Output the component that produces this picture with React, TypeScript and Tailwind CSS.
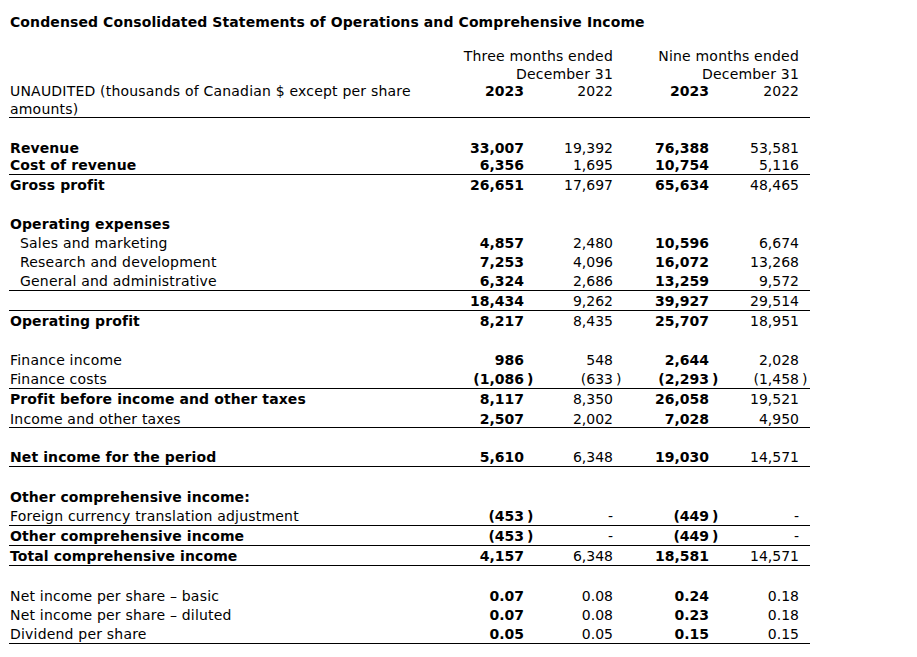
import React from "react";

type Row = {
  label?: string;
  bold?: boolean;
  indent?: boolean;
  vals?: string[];
  h: 17 | 19 | 20;
  border?: boolean;
};

const rows: Row[] = [
  { h: 20 },
  { label: "Revenue", bold: true, vals: ["33,007", "19,392", "76,388", "53,581"], h: 17 },
  { label: "Cost of revenue", bold: true, vals: ["6,356", "1,695", "10,754", "5,116"], h: 20, border: true },
  { label: "Gross profit", bold: true, vals: ["26,651", "17,697", "65,634", "48,465"], h: 20 },
  { h: 19 },
  { label: "Operating expenses", bold: true, h: 19 },
  { label: "Sales and marketing", indent: true, vals: ["4,857", "2,480", "10,596", "6,674"], h: 19 },
  { label: "Research and development", indent: true, vals: ["7,253", "4,096", "16,072", "13,268"], h: 19 },
  { label: "General and administrative", indent: true, vals: ["6,324", "2,686", "13,259", "9,572"], h: 20, border: true },
  { vals: ["18,434", "9,262", "39,927", "29,514"], h: 20, border: true },
  { label: "Operating profit", bold: true, vals: ["8,217", "8,435", "25,707", "18,951"], h: 19 },
  { h: 20 },
  { label: "Finance income", vals: ["986", "548", "2,644", "2,028"], h: 19 },
  { label: "Finance costs", vals: ["(1,086)", "(633)", "(2,293)", "(1,458)"], h: 20, border: true },
  { label: "Profit before income and other taxes", bold: true, vals: ["8,117", "8,350", "26,058", "19,521"], h: 20 },
  { label: "Income and other taxes", vals: ["2,507", "2,002", "7,028", "4,950"], h: 19, border: true },
  { h: 19 },
  { label: "Net income for the period", bold: true, vals: ["5,610", "6,348", "19,030", "14,571"], h: 20, border: true },
  { h: 20 },
  { label: "Other comprehensive income:", bold: true, h: 19 },
  { label: "Foreign currency translation adjustment", vals: ["(453)", "-", "(449)", "-"], h: 20, border: true },
  { label: "Other comprehensive income", bold: true, vals: ["(453)", "-", "(449)", "-"], h: 20, border: true },
  { label: "Total comprehensive income", bold: true, vals: ["4,157", "6,348", "18,581", "14,571"], h: 20, border: true },
  { h: 20 },
  { label: "Net income per share \u2013 basic", vals: ["0.07", "0.08", "0.24", "0.18"], h: 19 },
  { label: "Net income per share \u2013 diluted", vals: ["0.07", "0.08", "0.23", "0.18"], h: 19 },
  { label: "Dividend per share", vals: ["0.05", "0.05", "0.15", "0.15"], h: 20, border: true },
];

const heightClass: Record<number, string> = {
  17: "h-[17px]",
  19: "h-[19px]",
  20: "h-[20px]",
};

const GRID = "grid grid-cols-[431px_95px_89px_96px_90px]";

function Num({ v, bold }: { v: string; bold: boolean }) {
  const paren = v.endsWith(")");
  const main = paren ? v.slice(0, -1) : v;
  return (
    <div className={`flex justify-end ${bold ? "font-bold" : ""}`}>
      <span>{main}</span>
      <span className="w-[11px] pl-[3px] text-left">{paren ? ")" : ""}</span>
    </div>
  );
}

export default function App() {
  return (
    <div className="bg-white text-black font-['DejaVu_Sans',Verdana,sans-serif] text-[14px] w-[917px] h-[657px] overflow-hidden">
      <div className="h-[46px] pt-[13px] pl-[10px] leading-[18px] font-bold tracking-[0.1px]">
        Condensed Consolidated Statements of Operations and Comprehensive Income
      </div>
      <div className="ml-[9px] w-[801px]">
        <div className={`${GRID} h-[72px] border-b border-black leading-[17.6px]`}>
          <div className="self-start pt-[37px] pl-[1px] tracking-[0.2px] whitespace-nowrap">
            UNAUDITED (thousands of Canadian $ except per share
            <br />
            amounts)
          </div>
          <div className="col-span-2 self-start pt-[2px]">
            <div className="text-right pr-[11px] tracking-[0.2px]">Three months ended</div>
            <div className="text-right pr-[11px] tracking-[0.2px]">December 31</div>
            <div className="grid grid-cols-[95px_89px]">
              <div className="text-right pr-[11px] font-bold">2023</div>
              <div className="text-right pr-[11px]">2022</div>
            </div>
          </div>
          <div className="col-span-2 self-start pt-[2px]">
            <div className="text-right pr-[11px] tracking-[0.2px]">Nine months ended</div>
            <div className="text-right pr-[11px] tracking-[0.2px]">December 31</div>
            <div className="grid grid-cols-[96px_90px]">
              <div className="text-right pr-[11px] font-bold">2023</div>
              <div className="text-right pr-[11px]">2022</div>
            </div>
          </div>
        </div>
        {rows.map((r, i) => (
          <div
            key={i}
            className={`${GRID} ${heightClass[r.h]} items-center ${r.border ? "border-b border-black" : ""}`}
          >
            <div
              className={`${r.indent ? "pl-[11px]" : "pl-[1px]"} ${
                r.bold ? "font-bold tracking-[0.1px]" : "tracking-[0.2px]"
              } whitespace-nowrap`}
            >
              {r.label ?? ""}
            </div>
            {r.vals
              ? r.vals.map((v, j) => <Num key={j} v={v} bold={j % 2 === 0} />)
              : [0, 1, 2, 3].map((j) => <div key={j} />)}
          </div>
        ))}
      </div>
    </div>
  );
}
